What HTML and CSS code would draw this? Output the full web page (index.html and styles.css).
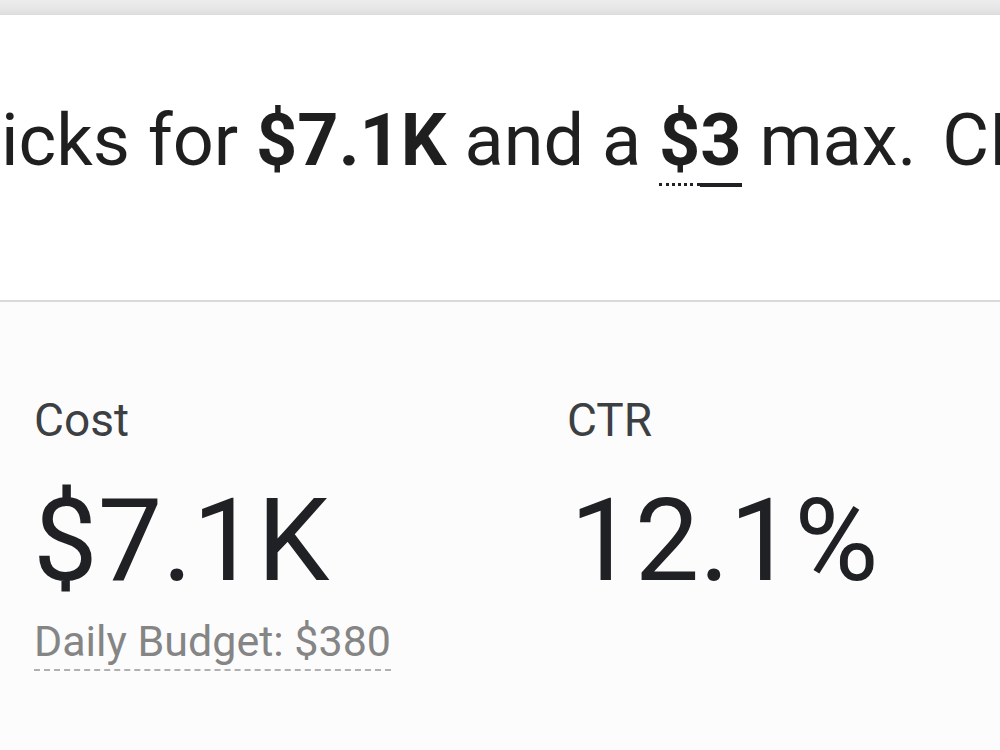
FILE: index.html
```html
<!DOCTYPE html>
<html lang="en">
<head>
    <meta charset="UTF-8">
    <title>Campaign summary</title>
    <link rel="stylesheet" href="styles.css">
</head>
<body>
<div class="topbar"></div>
<div class="summary">
    <p class="sentence">icks for <b>$7.1K</b> and a <b class="bid"><span class="bid_sign">$</span><span class="bid_num">3</span></b> max. <span class="tail">CPC</span></p>
</div>
<div class="metrics">
    <div class="metric">
        <div class="m_label">Cost</div>
        <div class="m_value">$7.1K</div>
        <div class="m_note">Daily Budget: $380</div>
    </div>
    <div class="metric metric_ctr">
        <div class="m_label">CTR</div>
        <div class="m_value">12.1%</div>
    </div>
</div>
</body>
</html>
```

FILE: styles.css
```css
* {
    margin: 0;
    padding: 0;
}

html, body {
    width: 1000px;
    height: 750px;
    overflow: hidden;
}

body {
    font-family: Roboto, "Liberation Sans", sans-serif;
    color: #202124;
    background: #fcfcfc;
}

.topbar {
    height: 15px;
    background: linear-gradient(#ececec, #e6e6e6 60%, #dcdcdc);
    box-shadow: 0 2px 3px rgba(0, 0, 0, .06);
}

.summary {
    height: 285px;
    background: #fff;
    border-bottom: 2px solid #dadada;
    overflow: hidden;
}

.sentence {
    padding-top: 83px;
    padding-left: 1px;
    font-size: 72px;
    line-height: 86px;
    white-space: nowrap;
    color: #1f1f1f;
}

.sentence b {
    font-weight: 700;
}

.tail {
    margin-left: 8px;
}

.bid_sign {
    border-bottom: 3px dotted #202124;
}

.bid_num {
    border-bottom: 4px solid #202124;
}

.metrics {
    display: grid;
    grid-template-columns: 533px auto;
    padding: 91px 0 0 34px;
}

.m_label {
    font-size: 46px;
    line-height: 54px;
    color: #3c4043;
}

.m_value {
    font-size: 115px;
    line-height: 135px;
    margin-top: 26px;
    margin-left: -1px;
    color: #202124;
}

.metric_ctr .m_value {
    margin-left: 3px;
}

.m_note {
    display: inline-block;
    margin-top: 8px;
    font-size: 43px;
    line-height: 50px;
    color: #858585;
    border-bottom: 2px dashed #b0b0b0;
    padding-bottom: 3px;
}
```
